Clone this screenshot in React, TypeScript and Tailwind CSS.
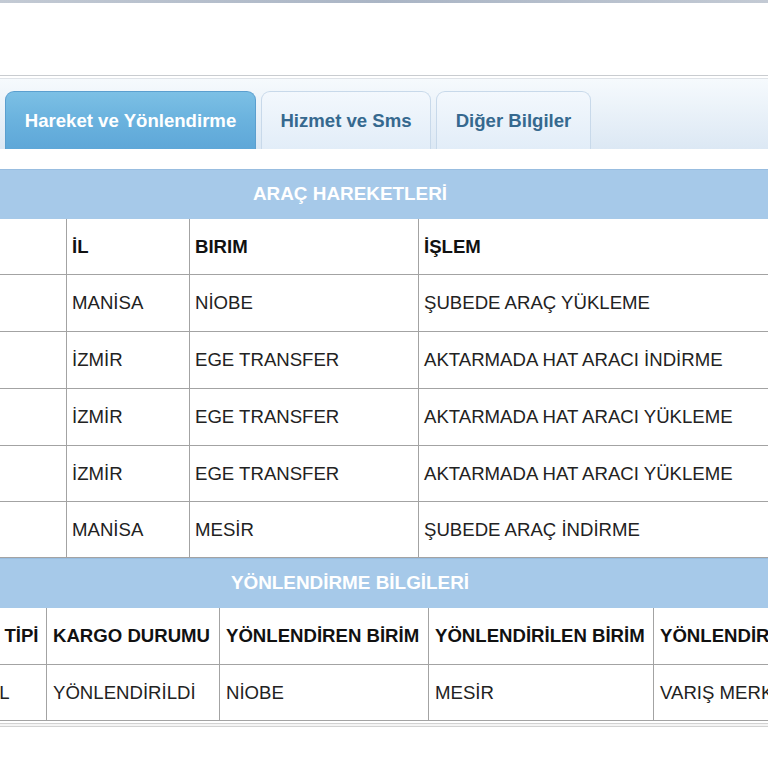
import React from 'react';

interface Movement {
  il: string;
  birim: string;
  islem: string;
  h: string;
}

const movements: Movement[] = [
  { il: 'MANİSA', birim: 'NİOBE', islem: 'ŞUBEDE ARAÇ YÜKLEME', h: 'h-[57px]' },
  { il: 'İZMİR', birim: 'EGE TRANSFER', islem: 'AKTARMADA HAT ARACI İNDİRME', h: 'h-[57px]' },
  { il: 'İZMİR', birim: 'EGE TRANSFER', islem: 'AKTARMADA HAT ARACI YÜKLEME', h: 'h-[57px]' },
  { il: 'İZMİR', birim: 'EGE TRANSFER', islem: 'AKTARMADA HAT ARACI YÜKLEME', h: 'h-[56px]' },
  { il: 'MANİSA', birim: 'MESİR', islem: 'ŞUBEDE ARAÇ İNDİRME', h: 'h-[56px]' },
];

const tabs = [
  { label: 'Hareket ve Yönlendirme', width: 'w-[251px]', active: true },
  { label: 'Hizmet ve Sms', width: 'w-[170px]', active: false },
  { label: 'Diğer Bilgiler', width: 'w-[155px]', active: false },
];

function SectionBar({ title }: { title: string }) {
  return (
    <div className="ml-[-100px] w-[900px] h-[50px] flex items-center justify-center bg-[#a6c9e9] border-t border-[#98bde0] text-white font-bold text-[18.9px]">
      {title}
    </div>
  );
}

export default function App() {
  return (
    <div
      className="w-[768px] h-[768px] overflow-hidden bg-white"
      style={{ fontFamily: '"Liberation Sans", Arial, sans-serif' }}
    >
      {/* top frame edge */}
      <div className="h-[3px] bg-gradient-to-r from-[#c3cad4] via-[#aab5c5] to-[#c3cad4]" />
      <div className="h-[72px]" />

      {/* Tab strip */}
      <div className="border-t border-[#c9ccd0] pt-[2px]">
        <div className="border-t border-[#dfe3e8] h-[71px] bg-gradient-to-b from-[#f6fafd] to-[#dce8f4] flex items-end gap-[5px] pl-[5px]">
          {tabs.map((tab) => (
            <div
              key={tab.label}
              className={`${tab.width} h-[58px] rounded-t-[9px] flex items-center justify-center font-bold text-[18.6px] border border-b-0 ${
                tab.active
                  ? 'bg-gradient-to-b from-[#7cc0e5] via-[#6ab2de] to-[#5ea7d8] border-[#5b9fcf] text-white'
                  : 'bg-gradient-to-b from-[#f3f8fd] to-[#e2edf8] border-[#c8d9ea] text-[#36698f]'
              }`}
            >
              {tab.label}
            </div>
          ))}
        </div>
      </div>
      <div className="h-[20px]" />

      {/* Araç hareketleri */}
      <SectionBar title="ARAÇ HAREKETLERİ" />
      <div className="ml-[-100px] w-[900px] text-[18.6px]">
        <div className="flex h-[56px] border-b border-[#a3a3a3] font-bold text-[#111]">
          <div className="w-[167px] border-r border-[#a3a3a3]" />
          <div className="w-[123px] border-r border-[#a3a3a3] flex items-center px-[5px]">İL</div>
          <div className="w-[229px] border-r border-[#a3a3a3] flex items-center px-[5px]">BIRIM</div>
          <div className="flex-1 flex items-center px-[5px]">İŞLEM</div>
        </div>
        {movements.map((m, i) => (
          <div key={i} className={`flex ${m.h} border-b border-[#a3a3a3] text-[#222]`}>
            <div className="w-[167px] border-r border-[#a3a3a3]" />
            <div className="w-[123px] border-r border-[#a3a3a3] flex items-center px-[5px]">{m.il}</div>
            <div className="w-[229px] border-r border-[#a3a3a3] flex items-center px-[5px]">{m.birim}</div>
            <div className="flex-1 flex items-center px-[5px] whitespace-nowrap">{m.islem}</div>
          </div>
        ))}
      </div>

      {/* Yönlendirme bilgileri */}
      <SectionBar title="YÖNLENDİRME BİLGİLERİ" />
      <div className="ml-[-72px] w-[980px] text-[18.6px] whitespace-nowrap">
        <div className="flex h-[57px] border-b border-[#a3a3a3] font-bold text-[#111]">
          <div className="w-[119px] border-r border-[#a3a3a3] flex items-center px-[2px]">KARGO TİPİ</div>
          <div className="w-[173px] border-r border-[#a3a3a3] flex items-center px-[6px]">KARGO DURUMU</div>
          <div className="w-[209px] border-r border-[#a3a3a3] flex items-center px-[6px]">YÖNLENDİREN BİRİM</div>
          <div className="w-[225px] border-r border-[#a3a3a3] flex items-center px-[6px]">YÖNLENDİRİLEN BİRİM</div>
          <div className="flex-1 flex items-center px-[6px]">YÖNLENDİRME NEDENİ</div>
        </div>
        <div className="flex h-[56px] border-b border-[#a3a3a3] text-[#222]">
          <div className="w-[119px] border-r border-[#a3a3a3] flex items-center px-[2px]">NORMAL</div>
          <div className="w-[173px] border-r border-[#a3a3a3] flex items-center px-[6px]">YÖNLENDİRİLDİ</div>
          <div className="w-[209px] border-r border-[#a3a3a3] flex items-center px-[6px]">NİOBE</div>
          <div className="w-[225px] border-r border-[#a3a3a3] flex items-center px-[6px]">MESİR</div>
          <div className="flex-1 flex items-center px-[6px]">VARIŞ MERKEZİ</div>
        </div>
      </div>
      <div className="mt-[2px] h-[4px] border-t border-b border-[#d2d2d2] bg-[#f4f4f4]" />
    </div>
  );
}
